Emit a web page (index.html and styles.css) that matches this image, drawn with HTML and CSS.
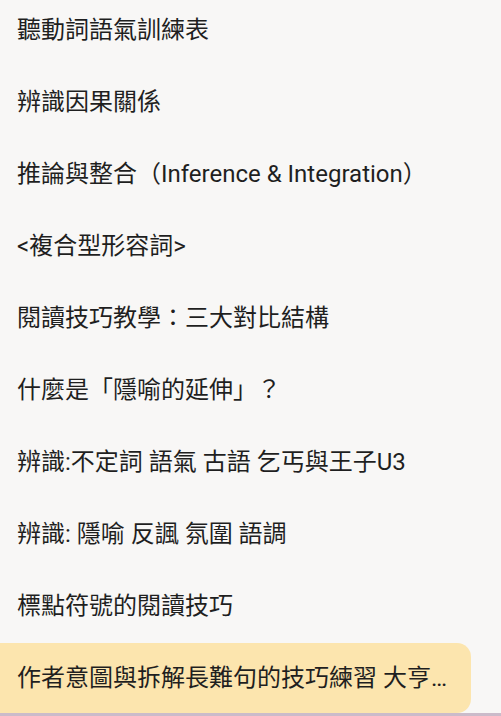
FILE: index.html
```html
<!DOCTYPE html>
<html lang="zh-Hant">
<head>
<meta charset="utf-8">
<title>閱讀技巧</title>
<link rel="stylesheet" href="styles.css">
</head>
<body>
<ul class="topics">
	<li class="topic">聽動詞語氣訓練表</li>
	<li class="topic">辨識因果關係</li>
	<li class="topic">推論與整合（Inference &amp; Integration）</li>
	<li class="topic">&lt;複合型形容詞&gt;</li>
	<li class="topic">閱讀技巧教學：三大對比結構</li>
	<li class="topic">什麼是「隱喻的延伸」？</li>
	<li class="topic">辨識:不定詞 語氣 古語 乞丐與王子U3</li>
	<li class="topic">辨識: 隱喻 反諷 氛圍 語調</li>
	<li class="topic">標點符號的閱讀技巧</li>
	<li class="topic active">作者意圖與拆解長難句的技巧練習 大亨小傳 第一章</li>
</ul>
<div class="bottom-bar"></div>
</body>
</html>
```

FILE: styles.css
```css
*{margin:0;padding:0;box-sizing:border-box;}
ul,li{list-style:none;}
html,body{height:100%;overflow:hidden;}
body{background:#f8f7f6;font-family:Roboto,"Noto Sans CJK TC",sans-serif;color:#1f1f1f;}
.topics{display:flex;flex-direction:column;gap:2px;width:471px;margin-top:-5px;}
.topic{height:70px;line-height:70px;padding:0 20px 0 17px;font-size:24px;white-space:nowrap;overflow:hidden;text-overflow:ellipsis;}
.topic.active{background:#fce5ae;border-radius:0 14px 14px 0;}
.bottom-bar{height:4px;background:#cbbbca;}
```
